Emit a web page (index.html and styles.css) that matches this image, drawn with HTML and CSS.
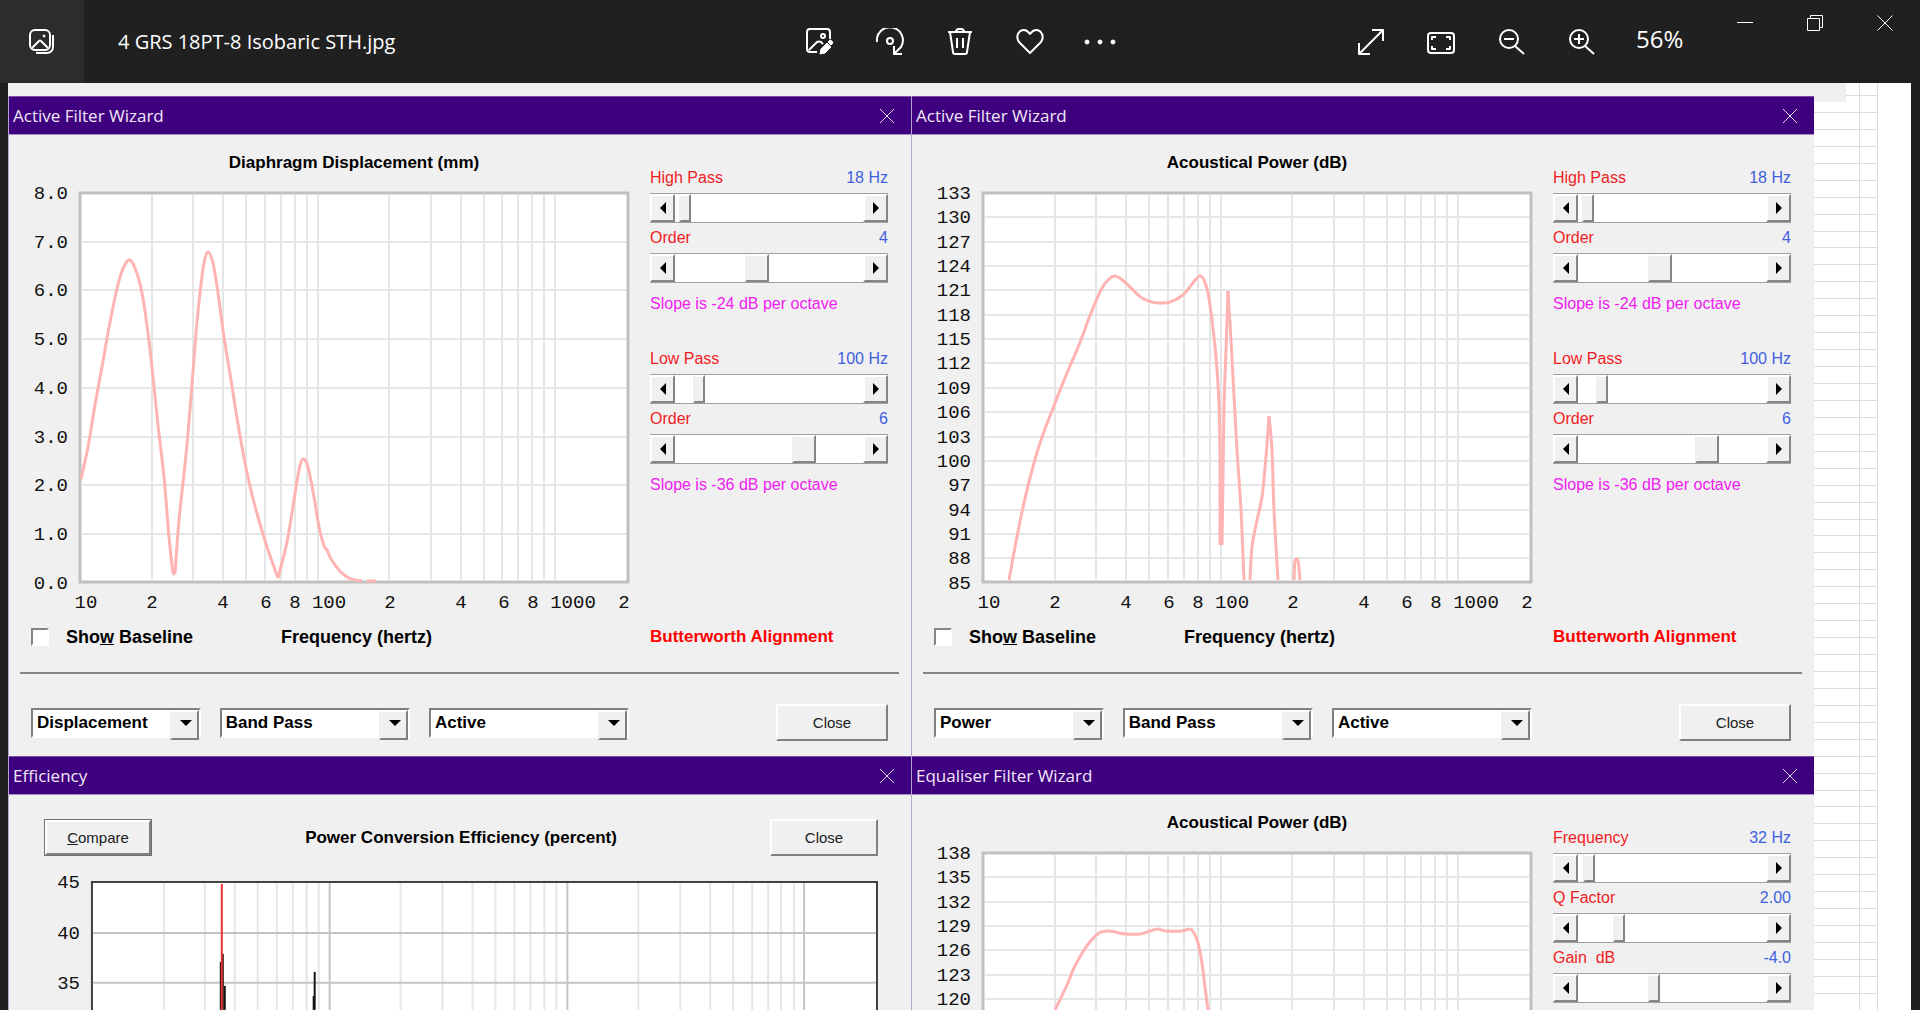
FILE: index.html
```html
<!DOCTYPE html>
<html lang="en">
<head>
    <meta charset="UTF-8">
    <meta name="viewport" content="width=device-width, initial-scale=1.0">
    <title>4 GRS 18PT-8 Isobaric STH.jpg</title>
    <link rel="stylesheet" href="styles.css">
</head>
<body>
    <header class="topbar">
        <div class="topbar-left">
            <button class="app-tile" aria-label="All photos">
                <svg class="icon" viewBox="0 0 28 28"><rect x="2" y="2" width="20" height="20" rx="5"/><path d="M25 7v12a6 6 0 0 1-6 6H8M4 20l7-7q1-1 2 0l7 7"/><circle class="fill" cx="16" cy="8" r="1"/></svg>
            </button>
            <h1 class="file-name">4 GRS 18PT-8 Isobaric STH.jpg</h1>
        </div>
        <div class="tools">
            <button class="tool" aria-label="Edit image">
                <svg class="icon" viewBox="0 0 28 28"><path d="M24 11V4a3 3 0 0 0-3-3H4a3 3 0 0 0-3 3v17a3 3 0 0 0 3 3h7M3 22l8-8q2-1 4 0l2 2"/><circle cx="17" cy="8" r="2"/><path class="fill" d="M14 26l1-5 6-6 4 4-6 6zM22 14l2-2q2 0 3 3l-2 2z"/></svg>
            </button>
            <button class="tool" aria-label="Rotate">
                <svg class="icon" viewBox="0 0 28 28"><path d="M1 14a13 13 0 1 1 24 5l-7 7M18 18v8h8"/><circle cx="14" cy="13" r="3"/></svg>
            </button>
            <button class="tool" aria-label="Delete">
                <svg class="icon" viewBox="0 0 28 28"><path d="M2 4h24M10 4q0-3 3-3h2q3 0 3 3M4 4l3 20q0 2 2 2h10q2 0 2-2l3-20M11 10v10M17 10v10"/></svg>
            </button>
            <button class="tool" aria-label="Add to favorites">
                <svg class="icon" viewBox="0 0 28 28"><path d="M14 25L3 14C-1 8 3 2 8 2q3 0 6 4 3-4 6-4c5 0 9 6 5 12z"/></svg>
            </button>
            <button class="tool" aria-label="See more">
                <svg class="icon wide" viewBox="0 0 34 28"><circle class="fill" cx="4" cy="14" r="2"/><circle class="fill" cx="17" cy="14" r="2"/><circle class="fill" cx="30" cy="14" r="2"/></svg>
            </button>
        </div>
        <div class="topbar-right">
            <button class="tool" aria-label="Full screen">
                <svg class="icon" viewBox="0 0 28 28"><path d="M2 26L26 2M15 2h11v11M2 15v11h11"/></svg>
            </button>
            <button class="tool" aria-label="Zoom to fit">
                <svg class="icon" viewBox="0 0 28 28"><rect x="1" y="5" width="26" height="20" rx="3"/><path d="M5 12V9h4M19 9h4v3M23 18v3h-4M9 21H5v-3"/></svg>
            </button>
            <button class="tool" aria-label="Zoom out">
                <svg class="icon" viewBox="0 0 28 28"><circle cx="12" cy="11" r="9"/><path d="M7 11h10M18 18l9 8"/></svg>
            </button>
            <button class="tool" aria-label="Zoom in">
                <svg class="icon" viewBox="0 0 28 28"><circle cx="12" cy="11" r="9"/><path d="M7 11h10M12 6v10M18 18l9 8"/></svg>
            </button>
            <span class="zoom-level">56%</span>
            <button class="caption" aria-label="Minimize">
                <svg class="icon small" viewBox="0 0 16 16"><path d="M0 7.500h16"/></svg>
            </button>
            <button class="caption" aria-label="Restore">
                <svg class="icon small" viewBox="0 0 16 16"><path d="M.5 3.500h12v12H.5zM3.500 3V.5h12v12H13"/></svg>
            </button>
            <button class="caption" aria-label="Close photo">
                <svg class="icon small" viewBox="0 0 16 16"><path d="M.5.5l15 15M15.500.5l-15 15"/></svg>
            </button>
        </div>
    </header>

    <main class="photo">
        <div class="collage">
            <section class="window">
                <div class="titlebar">
                    <h2>Active Filter Wizard</h2>
                    <button aria-label="Close window"><svg viewBox="0 0 14 14"><path d="M0 0l14 14M14 0L0 14"/></svg></button>
                </div>
                <div class="wizard">
                    <div>
                        <h3 class="chart-title">Diaphragm Displacement (mm)</h3>
                        <svg class="chart" id="displacementChart" viewBox="0 0 602 436"></svg>
                    </div>
                    <div class="controls">
                        <div class="row"><label for="hp1">High Pass</label><output for="hp1">18 Hz</output></div>
                        <div class="scroll"><button class="prev" aria-label="Lower"></button><input type="range" id="hp1" min="0" max="100" value="2"><button class="next" aria-label="Higher"></button></div>
                        <div class="row"><label for="hpo1">Order</label><output for="hpo1">4</output></div>
                        <div class="scroll"><button class="prev" aria-label="Lower"></button><input type="range" class="big" id="hpo1" min="1" max="8" value="4"><button class="next" aria-label="Higher"></button></div>
                        <p class="slope">Slope is -24 dB per octave</p>
                        <div class="row"><label for="lp1">Low Pass</label><output for="lp1">100 Hz</output></div>
                        <div class="scroll"><button class="prev" aria-label="Lower"></button><input type="range" id="lp1" min="0" max="100" value="10"><button class="next" aria-label="Higher"></button></div>
                        <div class="row"><label for="lpo1">Order</label><output for="lpo1">6</output></div>
                        <div class="scroll"><button class="prev" aria-label="Lower"></button><input type="range" class="big" id="lpo1" min="1" max="8" value="6"><button class="next" aria-label="Higher"></button></div>
                        <p class="slope">Slope is -36 dB per octave</p>
                    </div>
                    <div class="legend">
                        <label class="baseline"><input type="checkbox"><span>Sho<u>w</u> Baseline</span></label>
                        <span class="axis-name">Frequency (hertz)</span>
                    </div>
                    <strong class="alignment">Butterworth Alignment</strong>
                    <hr>
                    <div class="combos">
                        <span class="combo narrow"><select aria-label="Plot"><option>Displacement</option></select></span>
                        <span class="combo medium"><select aria-label="Filter"><option>Band Pass</option></select></span>
                        <span class="combo broad"><select aria-label="Type"><option>Active</option></select></span>
                    </div>
                    <button class="push close">Close</button>
                </div>
            </section>

            <section class="window">
                <div class="titlebar">
                    <h2>Active Filter Wizard</h2>
                    <button aria-label="Close window"><svg viewBox="0 0 14 14"><path d="M0 0l14 14M14 0L0 14"/></svg></button>
                </div>
                <div class="wizard">
                    <div>
                        <h3 class="chart-title">Acoustical Power (dB)</h3>
                        <svg class="chart" id="powerChart" viewBox="0 0 602 436"></svg>
                    </div>
                    <div class="controls">
                        <div class="row"><label for="hp2">High Pass</label><output for="hp2">18 Hz</output></div>
                        <div class="scroll"><button class="prev" aria-label="Lower"></button><input type="range" id="hp2" min="0" max="100" value="2"><button class="next" aria-label="Higher"></button></div>
                        <div class="row"><label for="hpo2">Order</label><output for="hpo2">4</output></div>
                        <div class="scroll"><button class="prev" aria-label="Lower"></button><input type="range" class="big" id="hpo2" min="1" max="8" value="4"><button class="next" aria-label="Higher"></button></div>
                        <p class="slope">Slope is -24 dB per octave</p>
                        <div class="row"><label for="lp2">Low Pass</label><output for="lp2">100 Hz</output></div>
                        <div class="scroll"><button class="prev" aria-label="Lower"></button><input type="range" id="lp2" min="0" max="100" value="10"><button class="next" aria-label="Higher"></button></div>
                        <div class="row"><label for="lpo2">Order</label><output for="lpo2">6</output></div>
                        <div class="scroll"><button class="prev" aria-label="Lower"></button><input type="range" class="big" id="lpo2" min="1" max="8" value="6"><button class="next" aria-label="Higher"></button></div>
                        <p class="slope">Slope is -36 dB per octave</p>
                    </div>
                    <div class="legend">
                        <label class="baseline"><input type="checkbox"><span>Sho<u>w</u> Baseline</span></label>
                        <span class="axis-name">Frequency (hertz)</span>
                    </div>
                    <strong class="alignment">Butterworth Alignment</strong>
                    <hr>
                    <div class="combos">
                        <span class="combo narrow"><select aria-label="Plot"><option>Power</option></select></span>
                        <span class="combo medium"><select aria-label="Filter"><option>Band Pass</option></select></span>
                        <span class="combo broad"><select aria-label="Type"><option>Active</option></select></span>
                    </div>
                    <button class="push close">Close</button>
                </div>
            </section>

            <section class="window">
                <div class="titlebar">
                    <h2>Efficiency</h2>
                    <button aria-label="Close window"><svg viewBox="0 0 14 14"><path d="M0 0l14 14M14 0L0 14"/></svg></button>
                </div>
                <div class="efficiency">
                    <div class="efficiency-head">
                        <button class="push default"><span><u>C</u>ompare</span></button>
                        <h3>Power Conversion Efficiency (percent)</h3>
                        <button class="push">Close</button>
                    </div>
                    <svg class="chart" id="efficiencyChart" viewBox="0 0 835 141"></svg>
                </div>
            </section>

            <section class="window">
                <div class="titlebar">
                    <h2>Equaliser Filter Wizard</h2>
                    <button aria-label="Close window"><svg viewBox="0 0 14 14"><path d="M0 0l14 14M14 0L0 14"/></svg></button>
                </div>
                <div class="wizard">
                    <div>
                        <h3 class="chart-title">Acoustical Power (dB)</h3>
                        <svg class="chart" id="equaliserChart" viewBox="0 0 602 170"></svg>
                    </div>
                    <div class="controls">
                        <div class="row"><label for="freq">Frequency</label><output for="freq">32 Hz</output></div>
                        <div class="scroll"><button class="prev" aria-label="Lower"></button><input type="range" id="freq" min="0" max="100" value="3"><button class="next" aria-label="Higher"></button></div>
                        <div class="row"><label for="qf">Q Factor</label><output for="qf">2.00</output></div>
                        <div class="scroll"><button class="prev" aria-label="Lower"></button><input type="range" id="qf" min="0" max="100" value="20"><button class="next" aria-label="Higher"></button></div>
                        <div class="row"><label for="gain">Gain&nbsp; dB</label><output for="gain">-4.0</output></div>
                        <div class="scroll"><button class="prev" aria-label="Lower"></button><input type="range" id="gain" min="0" max="100" value="40"><button class="next" aria-label="Higher"></button></div>
                    </div>
                </div>
            </section>
        </div>
        <div class="sheet">
            <svg id="sheetLines"></svg>
            <div class="sheet-corner"></div>
        </div>
    </main>

    <script src="script.js"></script>
</body>
</html>
```
FILE: styles.css
```css
* {
    box-sizing: border-box;
}
body {
    margin: 0;
    height: 100vh;
    display: flex;
    flex-direction: column;
    overflow: hidden;
    background-color: #202020;
    font-family: "Liberation Sans", Arial, sans-serif;
    font-size: 16px;
}
h1, h2, h3, p {
    margin: 0;
    font-weight: normal;
}
button {
    padding: 0;
    border: none;
    background: none;
    font: inherit;
}

/* photo viewer bar */
.topbar {
    flex: none;
    display: grid;
    grid-template-columns: 1fr auto 1fr;
    height: 83px;
    color: #fff;
    font-family: "Open Sans", "Noto Sans", sans-serif;
}
.topbar-left, .tools, .topbar-right {
    display: flex;
    align-items: center;
}
.topbar-right {
    justify-content: flex-end;
}
.app-tile {
    width: 84px;
    height: 83px;
    background-color: #2c2c2c;
}
.file-name {
    margin-left: 34px;
    font-size: 20px;
    line-height: 28px;
}
.tool, .caption {
    width: 70px;
    height: 83px;
}
.caption {
    align-self: flex-start;
    height: 46px;
}
.icon {
    display: block;
    width: 28px;
    height: 28px;
    margin: 0 auto;
    fill: none;
    stroke: #fff;
    stroke-width: 2;
    stroke-linejoin: round;
}
.icon.wide {
    width: 34px;
}
.icon.small {
    width: 16px;
    height: 16px;
    stroke-width: 1;
}
.icon .fill {
    fill: #fff;
    stroke-width: 1;
}
.zoom-level {
    width: 94px;
    padding-left: 20px;
    font-size: 24px;
    line-height: 78px;
    align-self: flex-start;
}

/* the opened picture */
.photo {
    flex: 1;
    min-height: 0;
    display: grid;
    grid-template-columns: 1806fr 97fr;
    margin: 0 9px 0 8px;
    overflow: hidden;
    background-color: #fff;
}
.collage {
    display: grid;
    grid-template-columns: 1fr 1fr;
    align-content: start;
    padding-top: 13px;
    background-color: #f0f0f0;
}
.window {
    min-width: 0;
    border-left: 1px solid #b7a3cf;
}
.titlebar {
    display: flex;
    justify-content: space-between;
    align-items: center;
    height: 39px;
    padding: 0 17px 0 4px;
    border-top: 1px solid #7a4fa8;
    border-bottom: 1px solid #a98bc8;
    background-color: #3f007f;
    color: #f0e8f8;
    font-family: "Open Sans", "Noto Sans", sans-serif;
}
.titlebar h2 {
    font-size: 17px;
    line-height: 24px;
}
.titlebar svg {
    display: block;
    width: 14px;
    height: 14px;
    stroke: #e6dcf0;
}
.wizard {
    display: grid;
    grid-template-columns: 1fr 238px;
    column-gap: 17px;
    padding: 0 23px 15px 22px;
}
.chart-title, .efficiency h3 {
    font-size: 17px;
    font-weight: bold;
}
.chart-title {
    padding: 11px 0 0 44px;
    line-height: 34px;
    text-align: center;
}
.chart {
    display: block;
    width: 100%;
}

/* charts */
.plot {
    fill: #fff;
    stroke: #c0c0c0;
    stroke-width: 3;
}
.plot.dark {
    stroke: #404040;
    stroke-width: 2;
}
.grid {
    stroke: #e6e6e6;
    stroke-width: 2;
}
.grid.major {
    stroke: #c4c4c4;
}
.curve {
    fill: none;
    stroke: #ffb3b3;
    stroke-width: 3;
}
.spike {
    stroke: #151515;
    stroke-width: 2;
}
.spike.red {
    stroke: #f03030;
}
.tick {
    font-family: "Liberation Mono", "Courier New", monospace;
    font-size: 19px;
    fill: #101010;
}

/* filter controls */
.controls {
    padding-top: 28px;
}
.row {
    display: flex;
    justify-content: space-between;
    line-height: 30px;
}
.row label {
    color: #f01c24;
}
.row output {
    color: #4060e0;
}
.scroll {
    display: flex;
    height: 30px;
    border-top: 1px solid #a0a0a0;
    border-bottom: 1px solid #a0a0a0;
    background-color: #fff;
}
.scroll button {
    display: flex;
    align-items: center;
    justify-content: center;
    flex: none;
    width: 25px;
    background-color: #f0f0f0;
    border: 2px solid;
    border-color: #fff #858585 #858585 #fff;
}
.scroll button::before {
    content: "";
    border: 6px solid transparent;
}
.scroll .prev::before {
    border-left-width: 0;
    border-right-color: #000;
}
.scroll .next::before {
    border-right-width: 0;
    border-left-color: #000;
}
.scroll input {
    appearance: none;
    flex: 1;
    min-width: 0;
    height: 28px;
    margin: 0;
    background: none;
}
.scroll input::-webkit-slider-thumb {
    appearance: none;
    width: 12px;
    height: 28px;
    background-color: #f0f0f0;
    border: 2px solid;
    border-color: #fff #858585 #858585 #f0f0f0;
}
.scroll input.big::-webkit-slider-thumb {
    width: 24px;
}
.slope {
    margin-bottom: 19px;
    line-height: 42px;
    color: #f020f0;
}
.slope:last-child {
    margin-bottom: 0;
}
.legend {
    display: flex;
    align-items: center;
    height: 42px;
    font-size: 18px;
    font-weight: bold;
}
.baseline {
    display: flex;
    align-items: center;
    gap: 17px;
    width: 250px;
}
.baseline input {
    appearance: none;
    width: 18px;
    height: 18px;
    margin: 0;
    background-color: #fff;
    border: 2px solid;
    border-color: #858585 #fff #fff #858585;
}
.alignment {
    font-size: 17px;
    line-height: 42px;
    color: #f00;
}
.wizard hr {
    grid-column: 1 / 3;
    width: auto;
    margin: 14px -11px 30px;
    border: none;
    border-top: 2px solid #858585;
}
.combos {
    display: flex;
    align-items: center;
    gap: 19px;
    padding-right: 4px;
}
.combo {
    position: relative;
    flex: 190;
    height: 30px;
    border: 2px solid;
    border-color: #808080 #fff #fff #808080;
    background-color: #fff;
}
.combo.narrow {
    flex: 169;
}
.combo.broad {
    flex: 200;
}
.combo select {
    appearance: none;
    display: block;
    width: 100%;
    height: 26px;
    padding: 0 26px 0 4px;
    border: none;
    background: none;
    color: #000;
    font: inherit;
    font-size: 17px;
    font-weight: bold;
}
/* drop-down arrow over the field */
.combo::before {
    content: "";
    position: absolute;
    top: 0;
    right: 0;
    width: 25px;
    height: 26px;
    background-color: #f0f0f0;
    border: 2px solid;
    border-color: #fff #808080 #808080 #f0f0f0;
    pointer-events: none;
}
.combo::after {
    content: "";
    position: absolute;
    top: 10px;
    right: 7px;
    border: 6px solid transparent;
    border-top-color: #000;
    border-bottom-width: 0;
    pointer-events: none;
}
.push {
    width: 108px;
    height: 37px;
    border: 2px solid;
    border-color: #fff #808080 #808080 #fff;
    background-color: #f0f0f0;
    color: #202020;
    font-size: 15px;
}
.push.close {
    justify-self: end;
    width: 112px;
}
.push.default {
    outline: 1px solid #707070;
    outline-offset: -1px;
    border-width: 3px;
}
.efficiency {
    padding: 24px 33px 0 35px;
}
.efficiency-head {
    display: flex;
    justify-content: space-between;
    align-items: center;
    margin-bottom: 13px;
}

/* spreadsheet showing behind the windows */
.sheet {
    position: relative;
    overflow: hidden;
}
.sheet svg {
    display: block;
    width: 100%;
    height: 100%;
    stroke: #dcdcdc;
}
.sheet-corner {
    position: absolute;
    top: 0;
    left: 0;
    width: 32px;
    height: 19px;
    background-color: #f0f0f0;
}
```
FILE: script.js
```javascript
const SVG_NS = "http://www.w3.org/2000/svg";
const DECADE = 237.6;

function add(svg, tag, attributes, text) {
    const element = document.createElementNS(SVG_NS, tag);
    for (const name in attributes) {
        element.setAttribute(name, attributes[name]);
    }
    if (text !== undefined) {
        element.textContent = text;
    }
    svg.appendChild(element);
}

function line(svg, className, x1, y1, x2, y2) {
    add(svg, "line", { class: className, x1: x1, y1: y1, x2: x2, y2: y2 });
}

// Smooth curve through the points (Catmull-Rom)
function smoothPath(points) {
    let d = `M${points[0][0]} ${points[0][1]}`;
    for (let i = 0; i < points.length - 1; i++) {
        const a = points[i - 1] || points[i];
        const b = points[i];
        const c = points[i + 1];
        const e = points[i + 2] || c;
        d += `C${b[0] + (c[0] - a[0]) / 6} ${b[1] + (c[1] - a[1]) / 6}`;
        d += ` ${c[0] - (e[0] - b[0]) / 6} ${c[1] - (e[1] - b[1]) / 6} ${c[0]} ${c[1]}`;
    }
    return d;
}

function drawChart(id, labels, step, height, curves) {
    const svg = document.getElementById(id);
    const left = 49;
    const top = 13;
    const width = 548;
    add(svg, "rect", { class: "plot", x: left, y: top, width: width, height: height });
    labels.forEach((label, i) => {
        const y = Math.round(top + i * step);
        if (i > 0 && y < top + height - 2) {
            line(svg, "grid", left + 2, y, left + width - 2, y);
        }
        add(svg, "text", { class: "tick", x: 37, y: y + 6, "text-anchor": "end" }, label);
    });
    for (let decade = 0; decade < 3; decade++) {
        for (let n = 1; n < 10; n++) {
            const x = Math.round(left + DECADE * (decade + Math.log10(n)));
            if (x > left && x < left + width - 4) {
                line(svg, "grid", x, top + 2, x, top + height - 2);
            }
        }
    }
    // the frequency labels only fit when the whole plot is in view
    if (svg.viewBox.baseVal.height > top + height) {
        const names = [["10", 55], ["2", 121], ["4", 192], ["6", 235], ["8", 264], ["100", 298],
            ["2", 359], ["4", 430], ["6", 473], ["8", 502], ["1000", 542], ["2", 593]];
        names.forEach(([name, x]) => {
            add(svg, "text", { class: "tick", x: x, y: top + height + 26, "text-anchor": "middle" }, name);
        });
    }
    curves.forEach(points => {
        add(svg, "path", { class: "curve", d: smoothPath(points), transform: `translate(${left} ${top})` });
    });
}

function drawEfficiency() {
    const svg = document.getElementById("efficiencyChart");
    const left = 48;
    const top = 13;
    const width = 786;
    add(svg, "rect", { class: "plot dark", x: left, y: top, width: width, height: 454 });
    for (let decade = 0; decade < 4; decade++) {
        for (let n = 1; n < 10; n++) {
            const x = Math.round(left + 237.8 * (decade + Math.log10(n)));
            if (x > left && x < left + width - 2) {
                line(svg, n === 1 ? "grid major" : "grid", x, top + 1, x, 141);
            }
        }
    }
    ["45", "40", "35"].forEach((label, i) => {
        const y = Math.round(top + i * 50.5);
        if (i > 0) {
            line(svg, "grid major", left + 1, y, left + width - 1, y);
        }
        add(svg, "text", { class: "tick", x: 36, y: y + 6, "text-anchor": "end" }, label);
    });
    line(svg, "spike", 177, 93, 177, 141);
    line(svg, "spike", 179, 85, 179, 141);
    line(svg, "spike", 181, 117, 181, 141);
    line(svg, "spike", 271, 103, 271, 141);
    line(svg, "spike", 270, 127, 270, 141);
    line(svg, "spike red", 178, 15, 178, 141);
}

function drawSheet() {
    const svg = document.getElementById("sheetLines");
    for (let i = 0; i < 60; i++) {
        const y = Math.round(13 + i * 16.94) - 0.5;
        line(svg, "", 0, y, 63, y);
    }
    line(svg, "", 45.5, 0, 45.5, 1020);
    line(svg, "", 63.5, 0, 63.5, 1020);
}

drawChart("displacementChart", ["8.0", "7.0", "6.0", "5.0", "4.0", "3.0", "2.0", "1.0", "0.0"], 48.7, 389, [
    [[1, 286], [8, 254], [15, 212], [22, 174], [28, 140], [36, 100], [42, 78], [49, 67], [55, 75], [62, 100],
        [68, 140], [73, 184], [78, 232], [84, 284], [89, 344], [93, 381]],
    [[93, 381], [95, 381]],
    [[95, 381], [99, 327], [106, 262], [111, 204], [116, 140], [120, 100], [124, 70], [128, 59], [133, 70],
        [138, 100], [144, 144], [151, 187], [159, 237], [167, 280], [176, 317], [187, 354], [198, 385]],
    [[198, 385], [207, 349], [214, 307], [219, 277], [223, 266], [228, 274], [234, 304], [239, 334], [244, 353],
        [247, 357], [251, 366], [259, 377], [267, 384], [275, 387], [282, 388]],
    [[287, 388], [296, 388]]
]);

drawChart("powerChart", ["133", "130", "127", "124", "121", "118", "115", "112", "109", "106", "103", "100", "97",
    "94", "91", "88", "85"], 24.35, 389, [
    [[26, 387], [32, 354], [39, 319], [47, 285], [57, 250], [72, 210], [84, 180], [96, 152], [108, 120], [119, 95],
        [126, 86], [132, 83], [138, 86], [144, 91], [152, 99], [159, 105], [169, 109], [177, 110], [187, 109],
        [200, 102], [209, 91], [215, 84], [218, 83], [221, 87], [225, 100], [229, 127], [233, 164], [236, 210],
        [237, 260], [237, 352]],
    [[239, 352], [240, 284], [241, 214], [243, 157], [245, 98]],
    [[245, 98], [247, 130], [250, 184], [254, 257], [258, 317], [261, 387]],
    [[267, 387], [269, 354], [274, 327], [279, 304], [283, 264], [286, 223]],
    [[286, 223], [289, 257], [291, 317], [295, 387]],
    [[311, 387], [312, 368], [315, 368], [317, 387]]
]);

drawChart("equaliserChart", ["138", "135", "132", "129", "126", "123", "120"], 24.35, 389, [
    [[72, 157], [84, 132], [90, 117], [98, 102], [106, 90], [116, 80], [125, 78], [132, 79], [142, 81], [157, 81],
        [167, 78], [175, 76], [183, 78], [199, 78], [207, 76], [211, 80], [215, 90], [219, 110], [222, 134],
        [225, 157]]
]);

drawEfficiency();
drawSheet();
```
